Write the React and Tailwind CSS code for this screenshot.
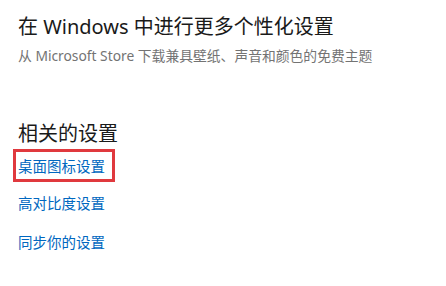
export default function App() {
    const font = { fontFamily: '"Noto Sans", "Noto Sans CJK SC", sans-serif' };

    return (
        <div className="w-[446px] h-[286px] bg-white pl-[18px] pt-[13px] overflow-hidden" style={font}>
            {/* 个性化 */}
            <h1 className="text-[20px] leading-[28px] text-[#1a1a1a]">在 Windows 中进行更多个性化设置</h1>
            <p className="mt-[6px] text-[13.8px] leading-[18px] text-[#737373]">
                从 Microsoft Store 下载兼具壁纸、声音和颜色的免费主题
            </p>

            {/* 相关的设置 */}
            <h2 className="mt-[55px] text-[20px] leading-[28px] text-[#1a1a1a]">相关的设置</h2>
            <div className="mt-[1px] -ml-[5px] w-[102px] border-[3px] border-[#e0393e] pl-[2px] pt-[4px] pb-[3px]">
                <a className="block text-[14.5px] leading-[20px] text-[#0067c0]">桌面图标设置</a>
            </div>
            <a className="block mt-[11px] text-[14.5px] leading-[20px] text-[#0067c0]">高对比度设置</a>
            <a className="block mt-[19px] text-[14.5px] leading-[20px] text-[#0067c0]">同步你的设置</a>
        </div>
    );
}
